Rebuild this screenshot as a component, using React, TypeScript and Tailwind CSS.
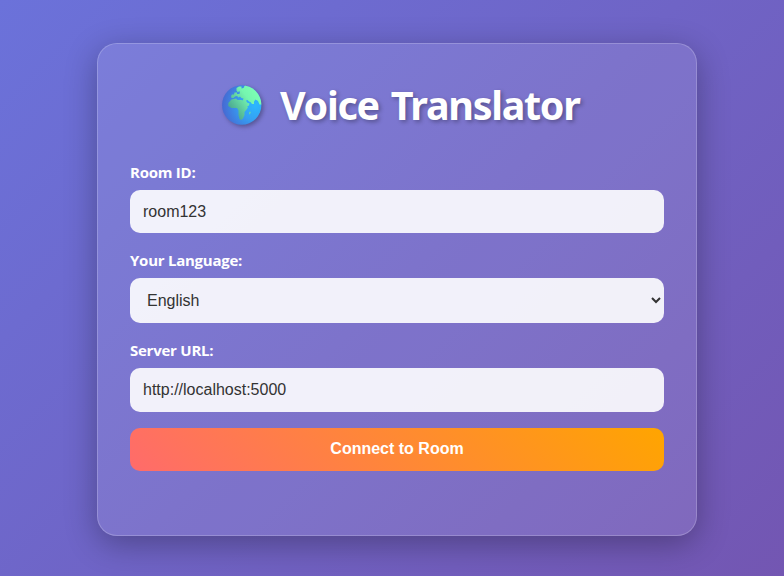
import React from "react";

function Globe() {
  return (
    <svg
      className="h-[41px] w-[41px] shrink-0 drop-shadow-[2px_2px_2px_rgba(0,0,0,0.3)]"
      viewBox="0 0 41 41"
    >
      <defs>
        <radialGradient id="sea" cx="0.85" cy="0.5" r="0.85">
          <stop offset="0" stopColor="#2bb8ff" />
          <stop offset="0.45" stopColor="#35a0f3" />
          <stop offset="1" stopColor="#4668d2" />
        </radialGradient>
        <linearGradient id="land" gradientUnits="userSpaceOnUse" x1="34" y1="4" x2="8" y2="23">
          <stop offset="0" stopColor="#7dffb4" />
          <stop offset="0.35" stopColor="#75f5af" />
          <stop offset="1" stopColor="#4aa58f" />
        </linearGradient>
        <clipPath id="disc">
          <circle cx="20.7" cy="20" r="19.7" />
        </clipPath>
      </defs>
      <circle cx="20.7" cy="20" r="19.7" fill="url(#sea)" />
      <g clipPath="url(#disc)" fill="url(#land)">
        <path d="M15.500 5.500V3l2.500-1.500h2.500v2l2-.5L24 0h10l7 9v10.500h-2.500l-1.500-3.500-2.500-1.500-1.500 2v2.500h-2l-1.500-2-1.500-.5-1.500-1.500-1.500.5 1 2 2.500 1-.5 2-2.500 1.500h-1.500L21.500 16l1-2.500-2-.5-1.500-1.500-1.500 1-1.500-1.500-2 .5-1.500 1.500H10.500L10 11l1-1.500h2l.5-2H16V9h2.500l.5-2.500h-1.500l-.5 1Z" />
        <path d="M10.500 14.500 15 13.500l1.500 1.500h4L23 16l1.500 5 2.500 1-1 2-2.500 3v3l-1.500 3.500-2 1.500-1.500-1-1-4v-4.500L16 23h-5.500L7.300 21v-3Z" />
        <path d="m28.300 27 .9-.6.4 1-.7 2-.8-.4Z" />
      </g>
    </svg>
  );
}

const labelClass =
  "block h-[22px] text-[15px] leading-[22px] font-bold tracking-[-0.25px] font-['Open_Sans','Noto_Sans',sans-serif]";
const fieldClass =
  "block w-full rounded-[10px] bg-white/90 text-base text-[#333] outline-none font-['Liberation_Sans',Arial,sans-serif]";

export default function App() {
  return (
    <main className="h-[576px] w-[784px] overflow-hidden bg-[linear-gradient(135deg,#6b72da_0%,#7356b2_100%)] pt-[43px] pl-[97px] text-white">
      <section className="h-[493px] w-[600px] rounded-[20px] border border-white/20 bg-white/10 px-8 shadow-[0_8px_32px_rgba(0,0,0,0.3)]">
        <h1 className="mt-[34px] flex h-[54px] items-center pl-[91px] font-['Noto_Sans','Open_Sans',sans-serif] text-[39.5px] leading-[54px] font-bold whitespace-nowrap [text-shadow:2px_2px_4px_rgba(0,0,0,0.3)]">
          <Globe />
          <span className="-mt-px ml-[18px] tracking-[-1.3px] [word-spacing:3px]">Voice Translator</span>
        </h1>
        <form className="mt-[29px]" onSubmit={(e) => e.preventDefault()}>
          <label htmlFor="room" className={labelClass}>Room ID:</label>
          <input id="room" defaultValue="room123" className={`${fieldClass} mt-[7px] h-[43px] px-[13px]`} />
          <label htmlFor="language" className={`${labelClass} mt-4`}>Your Language:</label>
          <select id="language" defaultValue="en" className={`${fieldClass} mt-[7px] h-[45px] px-[13px]`}>
            <option value="en">English</option>
          </select>
          <label htmlFor="server" className={`${labelClass} mt-4`}>Server URL:</label>
          <input id="server" defaultValue="http://localhost:5000" className={`${fieldClass} mt-[7px] h-[44px] px-[13px]`} />
          <button className="mt-4 block h-[43px] w-full rounded-[10px] bg-[linear-gradient(45deg,#ff6b6b,#ffa500)] pb-[2px] font-['Liberation_Sans',Arial,sans-serif] text-base font-bold">
            Connect to Room
          </button>
        </form>
      </section>
    </main>
  );
}
